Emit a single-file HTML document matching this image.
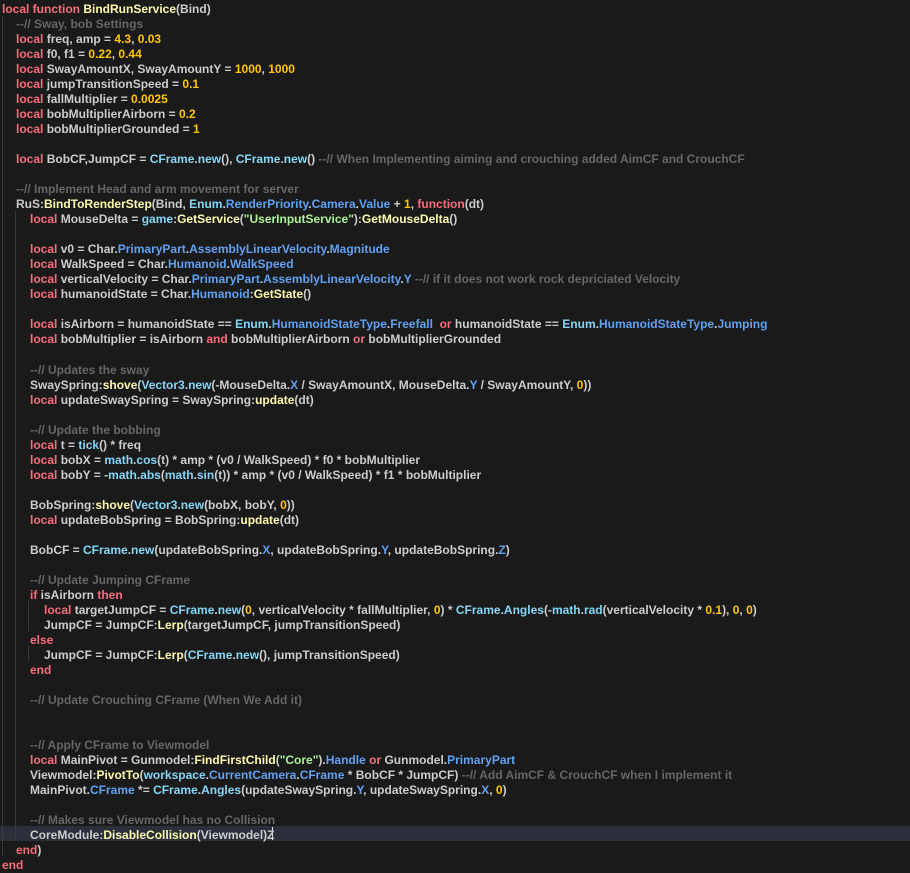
<!DOCTYPE html>
<html><head><meta charset="utf-8"><style>
html,body{margin:0;padding:0;background:#1a1a1a;width:910px;height:867px;overflow:hidden}
.l{position:absolute;left:0;height:15px;line-height:15px;white-space:pre;font-family:"Liberation Sans",Arial,sans-serif;font-weight:bold;font-size:12px;color:#cccccc}
.k{color:#f86d7c}.n{color:#ffc600}.f{color:#fdfbac}.p{color:#61a1f1}.b{color:#84d6f7}.s{color:#adf195}.c{color:#666666}
.g{position:absolute;width:1px;background:#3a3a3a}
.hl{position:absolute;left:0;top:826px;width:910px;height:15px;background:#2a2f3a}
</style></head><body>
<div class="hl"></div>
<div class="g" style="left:2px;top:16px;height:840px"></div>
<div class="g" style="left:15px;top:211px;height:630px"></div>
<div class="g" style="left:28px;top:601px;height:30px"></div>
<div class="g" style="left:28px;top:646px;height:15px"></div>
<div class="g" style="left:272px;top:827px;height:13px;background:#dddddd"></div>
<div id="c"></div>
<script>
var L=[
[0,'<span class="k">local function</span> <span class="f">BindRunService</span>(Bind)'],
[1,'<span class="c">--// Sway, bob Settings</span>'],
[1,'<span class="k">local</span> freq, amp = <span class="n">4.3</span>, <span class="n">0.03</span>'],
[1,'<span class="k">local</span> f0, f1 = <span class="n">0.22</span>, <span class="n">0.44</span>'],
[1,'<span class="k">local</span> SwayAmountX, SwayAmountY = <span class="n">1000</span>, <span class="n">1000</span>'],
[1,'<span class="k">local</span> jumpTransitionSpeed = <span class="n">0.1</span>'],
[1,'<span class="k">local</span> fallMultiplier = <span class="n">0.0025</span>'],
[1,'<span class="k">local</span> bobMultiplierAirborn = <span class="n">0.2</span>'],
[1,'<span class="k">local</span> bobMultiplierGrounded = <span class="n">1</span>'],
[1,''],
[1,'<span class="k">local</span> BobCF,JumpCF = <span class="b">CFrame</span>.<span class="b">new</span>(), <span class="b">CFrame</span>.<span class="b">new</span>() <span class="c">--// When Implementing aiming and crouching added AimCF and CrouchCF</span>'],
[1,''],
[1,'<span class="c">--// Implement Head and arm movement for server</span>'],
[1,'RuS:<span class="f">BindToRenderStep</span>(Bind, <span class="b">Enum</span>.<span class="p">RenderPriority</span>.<span class="p">Camera</span>.<span class="p">Value</span> + <span class="n">1</span>, <span class="k">function</span>(dt)'],
[2,'<span class="k">local</span> MouseDelta = <span class="b">game</span>:<span class="f">GetService</span>(<span class="s">"UserInputService"</span>):<span class="f">GetMouseDelta</span>()'],
[2,''],
[2,'<span class="k">local</span> v0 = Char.<span class="p">PrimaryPart</span>.<span class="p">AssemblyLinearVelocity</span>.<span class="p">Magnitude</span>'],
[2,'<span class="k">local</span> WalkSpeed = Char.<span class="p">Humanoid</span>.<span class="p">WalkSpeed</span>'],
[2,'<span class="k">local</span> verticalVelocity = Char.<span class="p">PrimaryPart</span>.<span class="p">AssemblyLinearVelocity</span>.<span class="p">Y</span> <span class="c">--// if it does not work rock depriciated Velocity</span>'],
[2,'<span class="k">local</span> humanoidState = Char.<span class="p">Humanoid</span>:<span class="f">GetState</span>()'],
[2,''],
[2,'<span class="k">local</span> isAirborn = humanoidState == <span class="b">Enum</span>.<span class="p">HumanoidStateType</span>.<span class="p">Freefall</span>  <span class="k">or</span> humanoidState == <span class="b">Enum</span>.<span class="p">HumanoidStateType</span>.<span class="p">Jumping</span>'],
[2,'<span class="k">local</span> bobMultiplier = isAirborn <span class="k">and</span> bobMultiplierAirborn <span class="k">or</span> bobMultiplierGrounded'],
[2,''],
[2,'<span class="c">--// Updates the sway</span>'],
[2,'SwaySpring:<span class="f">shove</span>(<span class="b">Vector3</span>.<span class="b">new</span>(-MouseDelta.<span class="p">X</span> / SwayAmountX, MouseDelta.<span class="p">Y</span> / SwayAmountY, <span class="n">0</span>))'],
[2,'<span class="k">local</span> updateSwaySpring = SwaySpring:<span class="f">update</span>(dt)'],
[2,''],
[2,'<span class="c">--// Update the bobbing</span>'],
[2,'<span class="k">local</span> t = <span class="b">tick</span>() * freq'],
[2,'<span class="k">local</span> bobX = <span class="b">math</span>.<span class="b">cos</span>(t) * amp * (v0 / WalkSpeed) * f0 * bobMultiplier'],
[2,'<span class="k">local</span> bobY = -<span class="b">math</span>.<span class="b">abs</span>(<span class="b">math</span>.<span class="b">sin</span>(t)) * amp * (v0 / WalkSpeed) * f1 * bobMultiplier'],
[2,''],
[2,'BobSpring:<span class="f">shove</span>(<span class="b">Vector3</span>.<span class="b">new</span>(bobX, bobY, <span class="n">0</span>))'],
[2,'<span class="k">local</span> updateBobSpring = BobSpring:<span class="f">update</span>(dt)'],
[2,''],
[2,'BobCF = <span class="b">CFrame</span>.<span class="b">new</span>(updateBobSpring.<span class="p">X</span>, updateBobSpring.<span class="p">Y</span>, updateBobSpring.<span class="p">Z</span>)'],
[2,''],
[2,'<span class="c">--// Update Jumping CFrame</span>'],
[2,'<span class="k">if</span> isAirborn <span class="k">then</span>'],
[3,'<span class="k">local</span> targetJumpCF = <span class="b">CFrame</span>.<span class="b">new</span>(<span class="n">0</span>, verticalVelocity * fallMultiplier, <span class="n">0</span>) * <span class="b">CFrame</span>.<span class="b">Angles</span>(-<span class="b">math</span>.<span class="b">rad</span>(verticalVelocity * <span class="n">0.1</span>), <span class="n">0</span>, <span class="n">0</span>)'],
[3,'JumpCF = JumpCF:<span class="f">Lerp</span>(targetJumpCF, jumpTransitionSpeed)'],
[2,'<span class="k">else</span>'],
[3,'JumpCF = JumpCF:<span class="f">Lerp</span>(<span class="b">CFrame</span>.<span class="b">new</span>(), jumpTransitionSpeed)'],
[2,'<span class="k">end</span>'],
[2,''],
[2,'<span class="c">--// Update Crouching CFrame (When We Add it)</span>'],
[2,''],
[2,''],
[2,'<span class="c">--// Apply CFrame to Viewmodel</span>'],
[2,'<span class="k">local</span> MainPivot = Gunmodel:<span class="f">FindFirstChild</span>(<span class="s">"Core"</span>).<span class="p">Handle</span> <span class="k">or</span> Gunmodel.<span class="p">PrimaryPart</span>'],
[2,'Viewmodel:<span class="f">PivotTo</span>(<span class="b">workspace</span>.<span class="p">CurrentCamera</span>.<span class="p">CFrame</span> * BobCF * JumpCF) <span class="c">--// Add AimCF &amp; CrouchCF when I implement it</span>'],
[2,'MainPivot.<span class="p">CFrame</span> *= <span class="b">CFrame</span>.<span class="b">Angles</span>(updateSwaySpring.<span class="p">Y</span>, updateSwaySpring.<span class="p">X</span>, <span class="n">0</span>)'],
[2,''],
[2,'<span class="c">--// Makes sure Viewmodel has no Collision</span>'],
[2,'CoreModule:<span class="f">DisableCollision</span>(Viewmodel)Z'],
[1,'<span class="k">end</span>)'],
[0,'<span class="k">end</span>']
];
var h='';
for(var i=0;i<L.length;i++){h+='<div class="l" style="top:'+(2+15.02*i).toFixed(1)+'px;left:'+(2+14*L[i][0])+'px">'+L[i][1]+'</div>';}
document.getElementById('c').innerHTML=h;
</script>
</body></html>
